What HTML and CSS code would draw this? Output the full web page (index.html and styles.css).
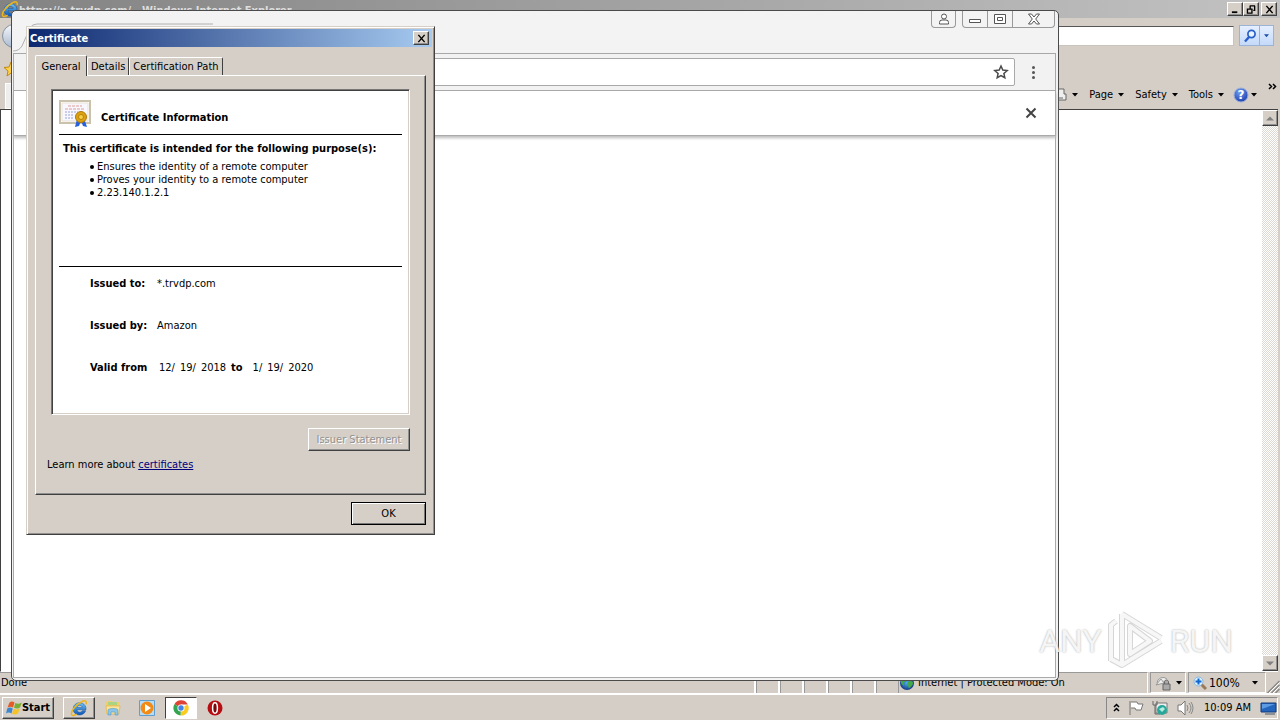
FILE: index.html
```html
<!DOCTYPE html>
<html lang="en">
<head>
<meta charset="utf-8">
<title>Certificate</title>
<link rel="stylesheet" href="styles.css">
</head>
<body>
<svg class="defs" aria-hidden="true">
  <defs>
    <linearGradient id="ieblue" x1="0" y1="0" x2="0" y2="1"><stop offset="0" stop-color="#6fc5f4"/><stop offset="1" stop-color="#0b55b5"/></linearGradient>
    <radialGradient id="help" cx=".4" cy=".3" r=".8"><stop offset="0" stop-color="#6f9df2"/><stop offset="1" stop-color="#1537a5"/></radialGradient>
    <radialGradient id="earth"><stop offset="0" stop-color="#4fb0ef"/><stop offset="1" stop-color="#153b86"/></radialGradient>
    <symbol id="ie" viewBox="0 0 18 18">
      <path fill-rule="evenodd" d="M16 10.800H7c.2 3 4.300 3 5.300.9h3.400C13.500 18 3.200 17.300 3.200 10.100 3.200 1.500 16.600 1.500 16 10.800zM7 8.400h5.200C12 5.600 7.300 5.600 7 8.400z" fill="url(#ieblue)" stroke="#0c4d9e" stroke-width=".5"/>
      <path d="M16.100 5.200c.7-2.800-.7-4.400-4.400-2.500C6.500 5.200 0 12.500 1.700 15.800c.8 1.400 3 .7 4.900-.6" fill="none" stroke="#edb51c" stroke-width="1.500"/>
    </symbol>
    <symbol id="down" viewBox="0 0 6 4"><path d="M0 0h6L3 3.500z" fill="#000"/></symbol>
    <symbol id="star" viewBox="0 0 16 16"><path d="M8 2l1.800 4 4.400.5-3.300 2.900.9 4.300L8 11.500l-3.800 2.200.9-4.300L1.800 6.500 6.200 6z" fill="none" stroke="#4a4a4a" stroke-width="1.500"/></symbol>
  </defs>
</svg>
<div class="desktop">
  <main class="browser">
    <header class="ie-title">
      <svg class="i18"><use href="#ie"/></svg>
      <span class="ie-name">https://p.trvdp.com/ - Windows Internet Explorer</span>
      <div class="caption-buttons">
        <button class="raised cap" aria-label="Minimize"><svg viewBox="0 0 12 10"><path d="M2 8h6" stroke="#000" stroke-width="2"/></svg></button>
        <button class="raised cap" aria-label="Restore"><svg viewBox="0 0 12 10"><path d="M4 1h6M4.500 1v3M9.500 1v5H8M1.500 4v5h5V4M1 4.500h6" fill="none" stroke="#000" stroke-width="1.500"/></svg></button>
        <button class="raised cap apart" aria-label="Close"><svg viewBox="0 0 12 10"><path d="M2.500 1l7 8M9.500 1l-7 8" stroke="#000" stroke-width="1.600"/></svg></button>
      </div>
    </header>
    <div class="ie-nav">
      <button class="back" aria-label="Back"></button>
      <input class="ie-search" aria-label="Search">
      <div class="search-buttons">
        <button class="find" aria-label="Search"><svg viewBox="0 0 14 14"><circle cx="8.500" cy="5" r="3.600" fill="#e8f4ff" stroke="#285fc8" stroke-width="1.700"/><path d="M6 8l-4 4.500" stroke="#285fc8" stroke-width="2.400"/></svg></button>
        <button class="find-more" aria-label="Search options"><svg viewBox="0 0 6 4"><path d="M0 0h6L3 3.500z" fill="#1c4fa8"/></svg></button>
      </div>
    </div>
    <div class="favorites"><svg class="i16" viewBox="0 0 16 16"><path d="M8 1l2 5 5 .5-4 3.500 1 5-4-3-4 3 1-5-4-3.500L6 6z" fill="#ffd04b" stroke="#c08a12"/></svg></div>
    <div class="ie-commands">
      <div class="page-tab"></div>
      <nav class="commands">
        <button class="print" aria-label="Print"><svg class="printer" viewBox="0 0 14 14"><path d="M3 1h8v5h2v6H1V6h2z" fill="#eee" stroke="#666"/><path d="M4 9h6v3H4z" fill="#aaa"/></svg><svg class="down"><use href="#down"/></svg></button>
        <button>Page<svg class="down"><use href="#down"/></svg></button>
        <button>Safety<svg class="down"><use href="#down"/></svg></button>
        <button>Tools<svg class="down"><use href="#down"/></svg></button>
        <button class="help" aria-label="Help"><svg class="i16" viewBox="0 0 16 16"><circle cx="8" cy="8" r="7" fill="url(#help)" stroke="#9cafdd"/><text x="8" y="12" text-anchor="middle">?</text></svg><svg class="down"><use href="#down"/></svg></button>
        <button class="more" aria-label="More"><svg viewBox="0 0 9 7"><path d="M1 1l2.500 2.500L1 6M5 1l2.500 2.500L5 6" fill="none" stroke="#000" stroke-width="1.500"/></svg></button>
      </nav>
    </div>
    <div class="ie-page">
      <div class="scrollbar">
        <button class="raised arrow" aria-label="Scroll up"><svg viewBox="0 0 8 5"><path d="M0 4.500L4 .5l4 4z" fill="#808080"/></svg></button>
        <button class="raised arrow" aria-label="Scroll down"><svg viewBox="0 0 8 5"><path d="M0 .5h8l-4 4z" fill="#808080"/></svg></button>
      </div>
    </div>
    <footer class="ie-status">
      <span class="done">Done</span>
      <i class="cell"></i><i class="cell"></i><i class="cell"></i><i class="cell"></i><i class="cell"></i><i class="cell"></i>
      <span class="zone"><svg class="i16" viewBox="0 0 16 16"><circle cx="8" cy="8" r="7" fill="url(#earth)"/><path d="M2 5c3-4 6-4 6-1S4 6 5 9s-2 1-3-1M9 7c2-2 5-1 5 1s-3 5-4 5 0-3-2-4z" fill="#43a848"/></svg>Internet | Protected Mode: On</span>
      <span class="panel filter"><svg class="i16" viewBox="0 0 16 16"><path d="M2 8a6 6 0 0 1 10-4M1 10l5-6 3 4z" fill="#eee" stroke="#999"/><path d="M8 9h7v6H8zM9.500 9V7c0-2.500 4-2.500 4 0v2" fill="#aaa" stroke="#666"/></svg><svg class="down"><use href="#down"/></svg></span>
      <span class="panel zoom"><svg class="i14" viewBox="0 0 14 14"><path d="M8 8l5 5" stroke="#9b7b57" stroke-width="3"/><circle cx="5.500" cy="5.500" r="4.500" fill="#d8efff" stroke="#8cb6dc"/><path d="M5.500 2.500v6M2.500 5.500h6" stroke="#1267cc" stroke-width="2"/></svg>100%<svg class="down"><use href="#down"/></svg></span>
      <svg class="grip" viewBox="0 0 13 13"><path d="M1 13L13 1M5 13l8-8M9 13l4-4" stroke="#888" stroke-width="1.500"/><path d="M2.500 13L13 2.500M6.500 13L13 6.500" stroke="#fff"/></svg>
    </footer>
  </main>
  <footer class="taskbar">
    <button class="raised start"><svg class="flag" viewBox="0 0 16 16"><path d="M3.500 2.500c2-1.500 3.500-1 5 0L7 7.500c-2-1.200-3.500-1-5.500 0z" fill="#e55b26"/><path d="M9.300 3c2 1 4 1 6.500-.500L14 7.500c-2 1.500-4 1.200-6 .2z" fill="#77ae36"/><path d="M1.200 8.500c2-1.500 4-1 5.500 0L5.500 13.500c-2-1.500-4-1-5.500 0z" fill="#3c87cf"/><path d="M7.500 8.800c2 1 4 1 6.200-.2L12 13.500c-2 1.500-4 1.200-6 .2z" fill="#f5c22a"/></svg>Start</button>
    <button class="raised task" aria-label="Internet Explorer"><svg class="i18"><use href="#ie"/></svg></button>
    <button class="task" aria-label="Explorer"><svg class="i18" viewBox="0 0 18 18"><path d="M2 4l1-2h5l1 1h6v12H2z" fill="#efcf67"/><path d="M4 3h9v3H4z" fill="#aad383"/><path d="M2 7h14l-1 8H3z" fill="#fae59c" stroke="#d6ad4d" stroke-width=".6"/><path d="M4 16v-5c0-2 10-2 10 0v5h-3v-3H7v3z" fill="#8cc5e8" stroke="#5898c7" stroke-width=".6"/></svg></button>
    <button class="task" aria-label="Media Player"><svg class="i18" viewBox="0 0 18 18"><path d="M1.500 1.500h15v15h-15z" fill="#b6dcf6" stroke="#5f9ed0"/><circle cx="9" cy="9" r="6.500" fill="#f28b16"/><path d="M7 5l6 4-6 4z" fill="#fff"/></svg></button>
    <button class="task pressed" aria-label="Chrome"><svg class="i16" viewBox="0 0 16 16"><path d="M8 8L1.400 4.200A7.500 7.500 0 0 1 14.800 4.500H8z" fill="#df4335"/><path d="M8 8l6.800-3.500A7.500 7.500 0 0 1 7.500 15.500z" fill="#fbcb22"/><path d="M8 8L7.500 15.500A7.500 7.500 0 0 1 1.400 4.200z" fill="#34a450"/><circle cx="8" cy="8" r="3.600" fill="#fff"/><circle cx="8" cy="8" r="2.700" fill="#4285e8"/></svg></button>
    <button class="task" aria-label="Opera"><svg class="i16" viewBox="0 0 16 16"><circle cx="8" cy="8" r="7.500" fill="#b60d12"/><ellipse cx="8" cy="8" rx="2.400" ry="5.200" fill="#7b080b" stroke="#fff" stroke-width="1.500"/></svg></button>
    <div class="tray">
      <svg class="chev" viewBox="0 0 7 9"><path d="M1 4l2.500-2.500L6 4M1 8l2.500-2.500L6 8" fill="none" stroke="#000" stroke-width="1.500"/></svg>
      <svg class="i16" viewBox="0 0 16 16"><path d="M2 1v14M3 2h6l1 2h5l-2 6H8L7 8H3" fill="#fff" stroke="#777"/></svg>
      <svg class="i16" viewBox="0 0 16 16"><path d="M4 3h11v10H4z" fill="#eee" stroke="#777"/><path d="M1 1v4h4V1M3 5v9h5" fill="none" stroke="#666"/><circle cx="10" cy="10" r="5" fill="#27a69a"/><path d="M7 9l4-2 2 2-3 3z" fill="#b7ebdf"/></svg>
      <svg class="i18" viewBox="0 0 18 18"><path d="M2 6h3l4-4v14l-4-4H2z" fill="#fff" stroke="#777"/><path d="M11 6q2 3 0 6M13 4q4 5 0 10M15 3q4 6 0 12" fill="none" stroke="#888"/></svg>
      <time>10:09 AM</time>
      <svg class="i18" viewBox="0 0 18 18"><path d="M2 4h15v9H2z" fill="#2365bd" stroke="#123a7c"/><path d="M3 5h13L3 10z" fill="#5c9be2"/><path d="M6 15h10" stroke="#456"/></svg>
    </div>
  </footer>

  <section class="chrome-window">
    <header class="tabstrip">
      <svg class="tab-edge" viewBox="0 0 202 30"><path d="M0 28q6 0 9-5l8-18q2-4 7-4h176" fill="none" stroke="#b0b0b0"/></svg>
      <button class="user" aria-label="Profile"><svg viewBox="0 0 12 12"><circle cx="6" cy="3.500" r="2.500"/><path d="M1.500 11V9.500Q1.500 7 4 7h4q2.500 0 2.500 2.500V11z"/></svg></button>
      <div class="window-buttons">
        <button aria-label="Minimize window"><svg viewBox="0 0 14 12"><path d="M1.500 6.500h11v3h-11z"/></svg></button>
        <button aria-label="Maximize window"><svg viewBox="0 0 14 12"><path d="M1.500 1.500h11v9h-11zM4.500 4.500h5v3h-5z"/></svg></button>
        <button class="wide" aria-label="Close window"><svg viewBox="0 0 14 12"><path d="M1.500 1h3L7 4l2.500-3h3L8.700 6l3.800 5h-3L7 8l-2.500 3h-3l3.800-5z"/></svg></button>
      </div>
    </header>
    <div class="toolbar">
      <div class="omnibox"><input aria-label="Address"><button aria-label="Bookmark"><svg class="i16"><use href="#star"/></svg></button></div>
      <button class="menu" aria-label="Menu"><i></i><i></i><i></i></button>
    </div>
    <div class="infobar"><button aria-label="Dismiss"><svg viewBox="0 0 12 12"><path d="M1.500 1.500l9 9M10.500 1.500l-9 9" stroke="#444" stroke-width="2"/></svg></button></div>
    <div class="blank"></div>
  </section>

  <section class="dialog" role="dialog" aria-labelledby="dlg">
    <header class="dialog-title"><h1 id="dlg">Certificate</h1><button class="raised cap" aria-label="Close dialog"><svg viewBox="0 0 12 10"><path d="M2.500 1l7 8M9.500 1l-7 8" stroke="#000" stroke-width="1.600"/></svg></button></header>
    <div class="tabs" role="tablist">
      <button class="tab selected" role="tab" aria-selected="true">General</button>
      <button class="tab" role="tab">Details</button>
      <button class="tab" role="tab">Certification Path</button>
    </div>
    <div class="sheet">
      <div class="cert">
        <header class="cert-head">
          <svg class="cert-icon" viewBox="0 0 32 30"><path d="M1 2h30v22H1z" fill="#fff" stroke="#cbc2ae" stroke-width="2"/><path d="M3 4h26v18H3z" fill="#f8f6ff" stroke="#e9e3d6"/><path d="M9 7h14M6 10h20" stroke="#dc9f94" stroke-dasharray="3 1"/><path d="M6 13h13M6 16h9M6 19h8" stroke="#9ba4d2" stroke-dasharray="2 1"/><path d="M18 20l-2 8 4-1 2-5 2 5 4 1-3-9z" fill="#2762dc"/><circle cx="22" cy="18" r="5.500" fill="#dda20f" stroke="#ad790a"/><circle cx="22" cy="18" r="2.500" fill="#f6cf4a" stroke="#b98208"/></svg>
          <h2>Certificate Information</h2>
        </header>
        <div class="purposes">
          <h3>This certificate is intended for the following purpose(s):</h3>
          <ul><li>Ensures the identity of a remote computer</li><li>Proves your identity to a remote computer</li><li>2.23.140.1.2.1</li></ul>
        </div>
        <dl class="facts">
          <div><dt>Issued to:</dt><dd>*.trvdp.com</dd></div>
          <div><dt>Issued by:</dt><dd>Amazon</dd></div>
          <div class="valid"><dt>Valid from</dt><dd><span>12/</span> <span>19/</span> <span>2018</span> <b>to</b> <span class="end">1/</span> <span>19/</span> <span>2020</span></dd></div>
        </dl>
      </div>
      <button class="raised issuer" disabled>Issuer Statement</button>
      <p class="learn">Learn more about <a href="#">certificates</a></p>
    </div>
    <div class="actions"><button class="ok">OK</button></div>
  </section>

  <div class="watermark">
    <span>ANY</span>
    <svg viewBox="0 0 60 64"><path d="M5 52V16l5-4M5 50l11 6M16 5l39 24M16 5v51l39-24M24 17v28l20-13z" fill="none" stroke="#d0d0d0" stroke-width="6" stroke-linejoin="round"/><path d="M5 52V16l5-4M5 50l11 6M16 5l39 24M16 5v51l39-24M24 17v28l20-13z" fill="none" stroke="#f6f6f6" stroke-width="4" stroke-linejoin="round"/></svg>
    <span>RUN</span>
  </div>
</div>
</body>
</html>
```

FILE: styles.css
```css
* { box-sizing: border-box; }
body { margin: 0; font: 11px/13px "DejaVu Sans Condensed", "DejaVu Sans", sans-serif; color: #000; }
button, input { font: inherit; color: inherit; margin: 0; padding: 0; border: 0; background: none; border-radius: 0; }
button { display: flex; align-items: center; justify-content: center; }
h1, h2, h3, p, ul, dl, dd { margin: 0; padding: 0; font-size: inherit; }
svg { display: block; flex: none; }
.defs { position: absolute; width: 0; height: 0; }
.i14 { width: 14px; height: 14px; }
.i16 { width: 16px; height: 16px; }
.i18 { width: 18px; height: 18px; }
.down { width: 6px; height: 4px; }
.desktop { position: relative; height: 100vh; min-height: 560px; overflow: hidden; display: flex; flex-direction: column; background: #d4cec6; white-space: nowrap; }
.raised { background: #d5cfc8; border: 1px solid; border-color: #fff #404040 #404040 #fff; box-shadow: inset -1px -1px #909090; }

.browser { flex: 1; display: flex; flex-direction: column; min-height: 0; }
.ie-title { height: 18px; display: flex; align-items: center; background: linear-gradient(90deg, #838383, #c2c2c2); color: #dedede; padding: 0 3px 0 1px; font-weight: bold; }
.ie-name { flex: 1; padding-top: 2px; }
.caption-buttons { display: flex; }
.cap { width: 16px; height: 14px; }
.cap svg { width: 11px; height: 9px; }
.apart { margin-left: 2px; }
.ie-nav { height: 35px; display: flex; align-items: center; padding: 0 6px 0 2px; }
.back { width: 24px; height: 24px; border-radius: 50%; border: 1px solid #8491a0; background: linear-gradient(#f5f7fa, #aabbd0); }
.ie-search { flex: 1; height: 20px; min-width: 0; background: #fff; border: 1px solid #c8c4bc; border-top-color: #555; margin: 0 5px 0 20px; }
.search-buttons { display: flex; height: 21px; border: 1px solid #9cb3d6; background: linear-gradient(#e5efff, #c4daf9); }
.find { width: 20px; border-right: 1px solid #9cb3d6; }
.find svg { width: 14px; height: 14px; }
.find-more { width: 13px; }
.find-more svg { width: 5px; height: 4px; }
.favorites { height: 27px; padding: 8px 0 0 3px; }
.ie-commands { height: 29px; display: flex; align-items: flex-end; justify-content: space-between; padding: 0 3px 0 5px; }
.page-tab { width: 180px; height: 26px; background: #eee; border: 1px solid #fff; }
.commands { display: flex; align-items: center; height: 29px; gap: 11px; }
.commands button { gap: 5px; }
.printer { width: 14px; height: 14px; }
.commands .help { gap: 2px; margin-left: -2px; }
.help text { font: bold 12px "DejaVu Sans", sans-serif; fill: #fff; }
.commands .more { align-self: flex-start; padding-top: 3px; }
.more svg { width: 9px; height: 7px; }
.ie-page { flex: 1; min-height: 0; display: flex; justify-content: flex-end; background: #fff; border-top: 1px solid #404040; border-left: 1px solid #404040; margin-right: 2px; border-bottom: 1px solid #fff; }
.scrollbar { width: 16px; display: flex; flex-direction: column; justify-content: space-between; background: repeating-conic-gradient(#dcd8d2 0 25%, #fff 0 50%) 0 0 / 2px 2px; }
.arrow { width: 16px; height: 16px; }
.arrow svg { width: 8px; height: 5px; }
.ie-status { height: 22px; display: flex; align-items: stretch; line-height: 20px; border-bottom: 1px solid #fff; }
.done { flex: 1; padding-left: 1px; border-top: 1px solid #999; }
.cell { width: 24px; border-left: 2px solid #fff; box-shadow: inset 1px 0 #999; }
.zone { width: 250px; display: flex; align-items: center; gap: 3px; border-left: 1px solid #999; border-top: 1px solid #999; border-right: 1px solid #fff; }
.panel { display: flex; align-items: center; margin-left: 2px; border: 1px solid; border-color: #999 #fff #fff #999; }
.filter { width: 36px; padding-left: 4px; gap: 5px; }
.zoom { width: 78px; padding-left: 4px; gap: 2px; font-size: 12px; }
.zoom .down { margin-left: 10px; }
.grip { width: 14px; height: 13px; align-self: flex-end; }

.taskbar { height: 26px; display: flex; align-items: center; padding: 0 2px; border-top: 1px solid #fff; }
.start { height: 22px; width: 52px; font-weight: bold; margin-right: 9px; }
.flag { width: 16px; height: 16px; }
.task { width: 32px; height: 22px; margin-right: 2px; }
.pressed { background: #fff; border: 1px solid; border-color: #404040 #fff #fff #404040; }
.tray { margin-left: auto; width: 172px; height: 22px; display: flex; align-items: center; gap: 8px; padding: 0 0 0 6px; border: 1px solid; border-color: #888 #fff #fff #888; }
.tray time { margin-left: auto; }
.chev { width: 7px; height: 9px; }

.chrome-window { position: absolute; left: 11px; top: 10px; right: 221px; bottom: 39px; display: flex; flex-direction: column; background: #f3f3f3; border: 1px solid #4b4b4b; border-radius: 5px; padding: 0 2px 2px 1px; isolation: isolate; }
.tabstrip { height: 42px; display: flex; align-items: flex-start; }
.tab-edge { width: 202px; height: 30px; align-self: flex-end; margin-right: auto; }
.tabstrip button svg { fill: #fff; stroke: #555; stroke-width: 1; width: 14px; height: 12px; }
.user { width: 25px; height: 17px; border: 1px solid #999; border-top: 0; border-radius: 0 0 4px 4px; }
.window-buttons { display: flex; height: 17px; margin: 0 1px 0 6px; border: 1px solid #999; border-top: 0; border-radius: 0 0 4px 4px; }
.window-buttons button { width: 25px; border-right: 1px solid #999; }
.window-buttons .wide { width: 41px; border: 0; }
.toolbar { height: 38px; display: flex; align-items: center; background: #f2f2f2; border: 1px solid #a8a8a8; }
.omnibox { flex: 1; height: 28px; display: flex; align-items: center; background: #fff; border: 1px solid #a9a9a9; border-radius: 2px; margin-left: 110px; padding-right: 5px; }
.omnibox input { flex: 1; min-width: 0; background: #fff; }
.menu { width: 36px; height: 28px; flex-direction: column; gap: 2px; margin-right: 4px; }
.menu i { width: 3px; height: 3px; border-radius: 50%; background: #555; }
.infobar { height: 45px; display: flex; align-items: center; justify-content: flex-end; padding-right: 18px; background: #fff; border: 1px solid #aaa; border-top: 0; box-shadow: 0 2px 3px #bbb; z-index: 1; }
.infobar svg { width: 12px; height: 12px; }
.blank { flex: 1; background: #fff; border: 1px solid #aaa; border-top: 0; }

.dialog { position: absolute; z-index: 2; left: 26px; top: 26px; width: 409px; background: #d5cfc8; border: 1px solid; border-color: #d5cfc8 #404040 #404040 #d5cfc8; box-shadow: inset 1px 1px #fff, inset -1px -1px #909090; padding: 2px 8px 9px; }
.dialog-title { height: 18px; display: flex; align-items: center; justify-content: space-between; margin: 0 -6px 8px; padding: 0 3px 0 1px; background: linear-gradient(90deg, #0c2870, #a6caf0); color: #fff; }
.tabs { display: flex; align-items: flex-end; height: 20px; }
.tab { height: 18px; padding: 0 4px; border: 1px solid #fff; border-right-color: #404040; border-bottom: 0; border-radius: 2px 2px 0 0; }
.tab + .tab { padding: 0 3px; }
.selected { height: 21px; width: 52px; z-index: 1; background: #d5cfc8; margin-bottom: -1px; }
.sheet { display: flex; flex-direction: column; border: 1px solid; border-color: #fff #404040 #404040 #fff; box-shadow: inset -1px -1px #909090; padding: 13px 15px 23px 11px; margin-bottom: 7px; }
.cert { height: 326px; margin-left: 4px; background: #fff; border: 1px solid; border-color: #777 #fff #fff #777; box-shadow: inset 1px 1px #404040, inset -1px -1px #d5cfc8; padding: 9px 7px; }
.cert-head { height: 36px; display: flex; align-items: flex-start; gap: 10px; border-bottom: 1px solid #000; }
.cert-icon { width: 32px; height: 30px; }
.cert-head h2 { padding-top: 12px; }
.purposes { height: 132px; padding: 7px 4px; border-bottom: 1px solid #000; }
.purposes ul { list-style: none; padding: 5px 0 0 27px; }
.purposes li { display: flex; align-items: center; gap: 3px; }
.purposes li::before { content: ""; width: 4px; height: 4px; border-radius: 50%; background: #000; }
.facts { padding: 10px 0 0 31px; display: flex; flex-direction: column; gap: 29px; }
.facts div { display: grid; grid-template-columns: 67px 1fr; }
.facts dt { font-weight: bold; }
.valid dd { display: flex; gap: 5px; padding-left: 2px; }
.end { margin-left: 5px; }
.issuer { width: 102px; height: 23px; margin-top: 13px; align-self: flex-end; color: #929292; text-shadow: 1px 1px #fff; }
.learn { margin-top: 7px; }
.learn a { color: #00007c; }
.actions { display: flex; justify-content: flex-end; }
.ok { width: 75px; height: 23px; border: 1px solid #000; box-shadow: inset 1px 1px #fff, inset -1px -1px #777; }

.watermark { position: absolute; right: 47px; bottom: 47px; display: flex; align-items: center; gap: 4px; font: 32px/64px Roboto, "Liberation Sans", sans-serif; color: #f4f4f4; text-shadow: 0 0 2px #999; opacity: .85; }
.watermark svg { width: 60px; height: 64px; }
```
